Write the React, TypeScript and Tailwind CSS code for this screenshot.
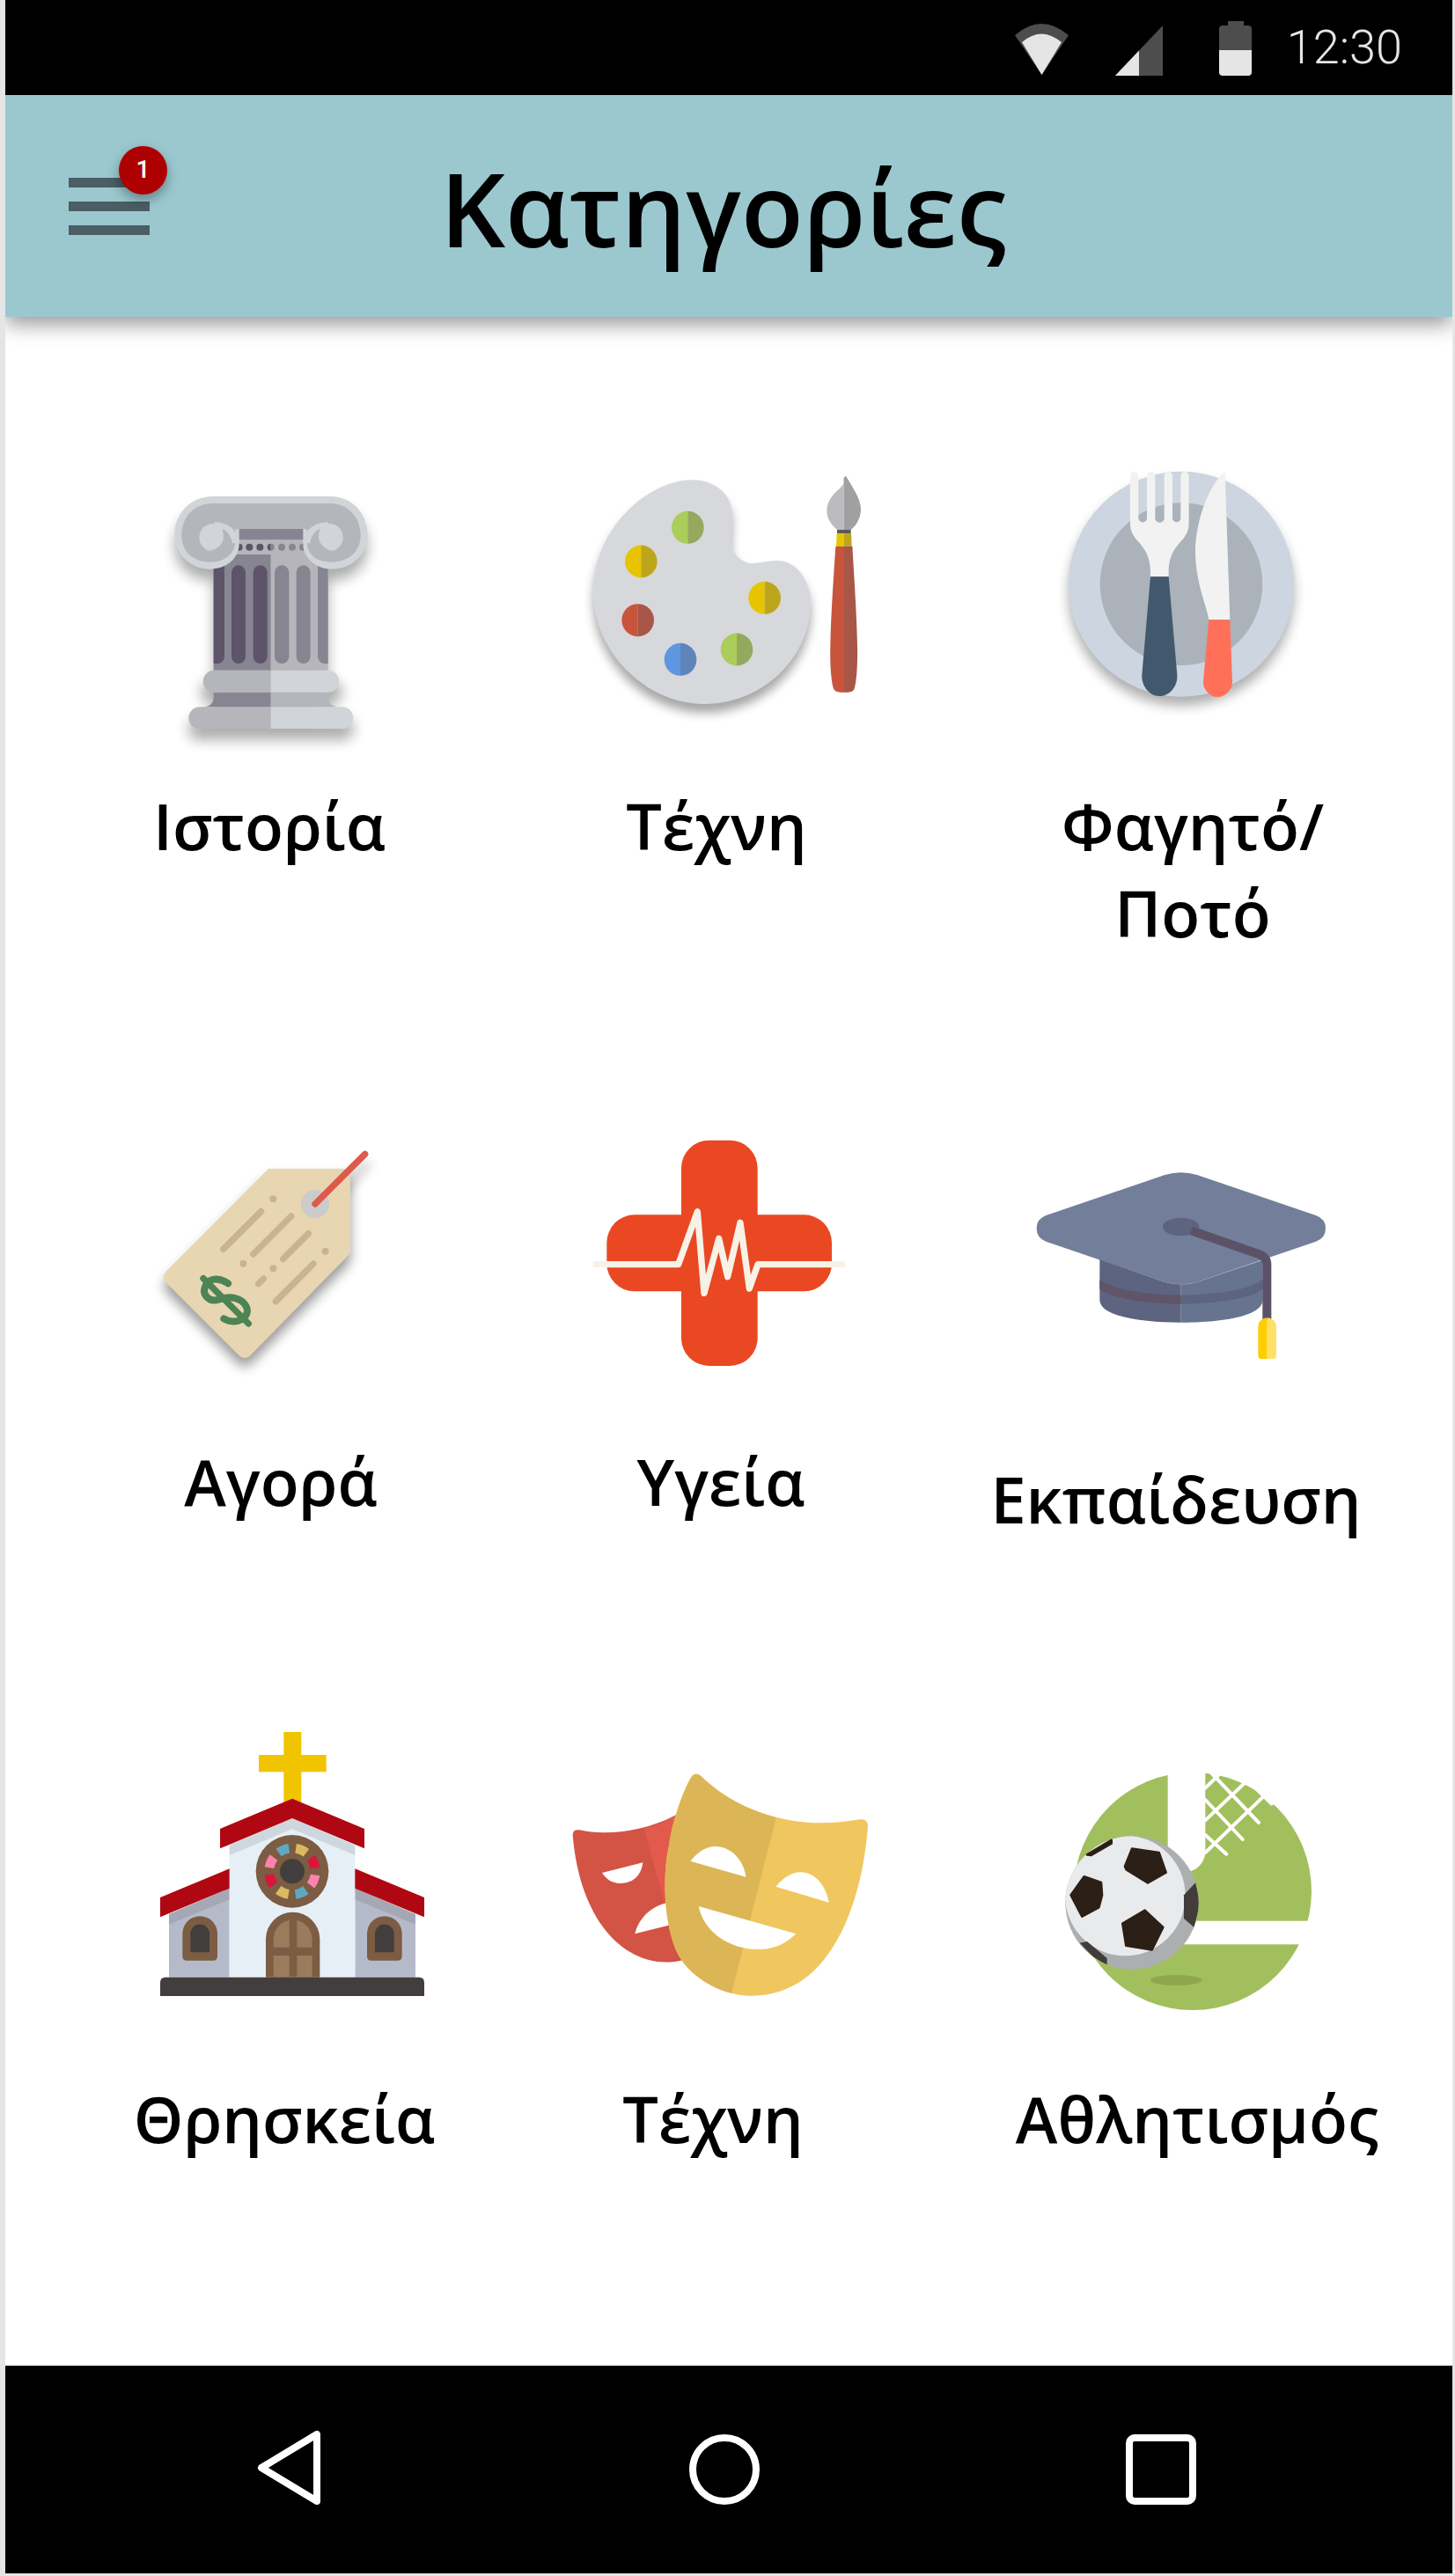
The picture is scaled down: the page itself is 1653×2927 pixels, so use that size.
import React from "react";

const Blur = ({ id, d }: { id: string; d: number }) => (
  <filter id={id} x="-40%" y="-40%" width="180%" height="180%">
    <feGaussianBlur stdDeviation={d} />
  </filter>
);

function ColumnIcon() {
  const silhouette =
    "M145 325 C145 250 200 192 275 192 H675 C750 192 803 250 803 325 C803 390 750 440 680 440 H668 V785 H680 A37 37 0 0 1 680 860 H668 V880 Q670 905 698 910 H720 A37 37 0 0 1 720 984 H228 A37 37 0 0 1 228 910 H250 Q276 905 278 880 V860 H270 A37 37 0 0 1 270 785 H278 V440 H265 C200 440 145 390 145 325Z";
  const Volute = ({ flip }: { flip?: boolean }) => (
    <g transform={flip ? "translate(948 0) scale(-1 1)" : undefined}>
      <path d="M280 292 C325 292 353 320 353 352" fill="none" stroke="#d1d4d9" strokeWidth="24" />
      <circle cx="276" cy="332" r="47" fill="#d1d4d9" />
      <path d="M306 303 C322 338 305 370 262 378 C300 385 332 365 332 332 C332 318 320 307 306 303Z" fill="#b5b6bb" />
    </g>
  );
  return (
    <svg viewBox="0 0 1200 1080" className="block h-[360px] w-[400px]">
      <defs>
        <Blur id="colblur" d={22} />
      </defs>
      <path d={silhouette} transform="translate(0 38)" fill="#000" opacity="0.32" filter="url(#colblur)" />
      <rect x="278" y="390" width="195" height="395" fill="#888593" />
      <rect x="473" y="390" width="195" height="395" fill="#b5b6bb" />
      <rect x="340" y="303" width="270" height="37" fill="#888593" />
      <rect x="340" y="340" width="270" height="50" fill="#b5b6bb" />
      {[365, 400, 436].map((x) => (
        <circle key={x} cx={x} cy="365" r="12" fill="#5d5469" />
      ))}
      {[510, 546, 582].map((x) => (
        <circle key={x} cx={x} cy="365" r="12" fill="#888593" />
      ))}
      <path d="M473 353 A12 12 0 0 0 473 377Z" fill="#5d5469" />
      <path d="M473 353 A12 12 0 0 1 473 377Z" fill="#888593" />
      <path d="M278 427 H315 V738 A24 24 0 0 1 291 762 H278Z" fill="#5d5469" />
      <rect x="339" y="427" width="48" height="335" rx="24" fill="#5d5469" />
      <rect x="413" y="427" width="48" height="335" rx="24" fill="#5d5469" />
      <rect x="486" y="427" width="49" height="335" rx="24" fill="#888593" />
      <rect x="560" y="427" width="48" height="335" rx="24" fill="#888593" />
      <path d="M668 427 H633 V738 A24 24 0 0 0 657 762 H668Z" fill="#888593" />
      <path
        d="M145 325 C145 250 200 192 275 192 H675 C750 192 803 250 803 325 C803 390 750 440 680 440 C625 440 583 400 583 355 V303 H365 V355 C365 400 325 440 265 440 C200 440 145 390 145 325Z"
        fill="#d1d4d9"
      />
      <path
        d="M169 325 C169 262 212 216 275 216 H675 C735 216 779 262 779 325 C779 382 735 416 680 416 C620 416 595 385 595 340 V303 H353 V340 C353 385 320 416 265 416 C210 416 169 382 169 325Z"
        fill="#b5b6bb"
      />
      <Volute />
      <Volute flip />
      <path d="M473 860 H278 V880 Q276 905 250 910 H473Z" fill="#888593" />
      <path d="M473 860 H668 V880 Q670 905 698 910 H473Z" fill="#b5b6bb" />
      <path d="M473 785 H280 A37.5 37.5 0 0 0 280 860 H473Z" fill="#b5b6bb" />
      <path d="M473 785 H668 A37.5 37.5 0 0 1 668 860 H473Z" fill="#d1d4d9" />
      <path d="M473 910 H230 A37 37 0 0 0 230 984 H473Z" fill="#b5b6bb" />
      <path d="M473 910 H717 A37 37 0 0 1 717 984 H473Z" fill="#d1d4d9" />
    </svg>
  );
}

function PaletteIcon() {
  const blob =
    "M440 136 C520 136 575 190 575 250 C575 290 572 320 572 350 C575 390 610 420 645 420 C670 420 695 411 730 411 C795 411 843 480 843 555 C843 740 680 900 480 900 C280 900 102 720 102 520 C102 300 290 136 440 136Z";
  const dots: [number, number, string, string][] = [
    [424, 298, "#abcd5c", "#95a95e"],
    [265, 414, "#e6c500", "#bea61c"],
    [686, 538, "#e6c500", "#bea61c"],
    [254, 614, "#c8543c", "#a75647"],
    [399, 748, "#5e97e0", "#5f84ba"],
    [591, 714, "#abcd5c", "#95a95e"],
  ];
  return (
    <svg viewBox="0 0 1200 960" className="block h-[320px] w-[400px] overflow-visible">
      <defs>
        <Blur id="palblur" d={18} />
      </defs>
      <path d={blob} transform="translate(0 30)" fill="#000" opacity="0.35" filter="url(#palblur)" />
      <path d={blob} fill="#d7d8dc" />
      {dots.map(([x, y, a, b]) => (
        <g key={`${x}-${y}`}>
          <path d={`M${x} ${y - 55.5} A55 55.5 0 0 0 ${x} ${y + 55.5}Z`} fill={a} />
          <path d={`M${x} ${y - 55.5} A55 55.5 0 0 1 ${x} ${y + 55.5}Z`} fill={b} />
        </g>
      ))}
      <path d="M956 306 H933 C915 290 898 270 898 240 C898 205 925 180 942 165 C955 152 962 135 963 122 L956 130Z" fill="#bcbcbe" />
      <path d="M956 306 H980 C1000 290 1014 265 1014 235 C1014 200 985 160 963 122 L956 130Z" fill="#a0a0a2" />
      <rect x="933" y="306" width="47" height="13" fill="#5a5a5a" />
      <path d="M932 319 H957 V362 H930Z" fill="#e6c500" />
      <path d="M957 319 H981 L983 362 H957Z" fill="#bea61c" />
      <path d="M957 362 H928 C920 480 912 600 910 700 C908 780 915 835 922 850 Q928 860 945 860 H957Z" fill="#c8543c" />
      <path d="M957 362 H985 C992 480 1000 600 1002 700 C1004 780 997 835 991 850 Q985 860 970 860 H957Z" fill="#a75647" />
    </svg>
  );
}

function CutleryIcon() {
  return (
    <svg viewBox="0 0 960 900" className="block h-[300px] w-[320px] overflow-visible">
      <defs>
        <Blur id="cutblur" d={20} />
      </defs>
      <circle cx="486" cy="491" r="384" fill="#000" opacity="0.32" filter="url(#cutblur)" />
      <circle cx="486" cy="461" r="384" fill="#cdd5e0" />
      <circle cx="486" cy="461" r="277" fill="#abb2ba" />
      <path
        d="M312 92 A14 14 0 0 1 340 92 V236 A14.5 14.5 0 0 0 369 236 V92 A14 14 0 0 1 397 92 V236 A15.5 15.5 0 0 0 428 236 V92 A14 14 0 0 1 456 92 V236 A14 14 0 0 0 484 236 V92 A14 14 0 0 1 512 92 V255 C512 320 443 320 443 420 V436 H381 V420 C381 320 312 320 312 255Z"
        fill="#f2f2f2"
      />
      <path d="M381 436 H443 L472 770 C475 810 445 843 412 843 C378 843 350 810 352 770Z" fill="#42596d" />
      <path d="M635 78 L652 582 H580 C575 540 535 460 534 350 C534 250 580 120 635 78Z" fill="#f2f2f2" />
      <path d="M580 583 H652 L660 795 C660 822 635 846 610 846 C585 846 560 822 561 795Z" fill="#ff7058" />
    </svg>
  );
}

function TagIcon() {
  const tag = "M435 144 H714 V432 L374 780 Q354 800 334 780 L88 534 Q68 514 88 492Z";
  const lines = [
    [281, 418, 410, 289],
    [383, 435, 512, 306],
    [485, 451, 571, 365],
    [460, 596, 588, 468],
    [401, 536, 418, 519],
  ];
  return (
    <svg viewBox="0 0 900 900" className="block h-[300px] w-[300px] overflow-visible">
      <defs>
        <Blur id="tagblur" d={20} />
      </defs>
      <path d={tag} transform="translate(0 30)" fill="#000" opacity="0.4" filter="url(#tagblur)" />
      <path d="M594 264 L764 94" transform="translate(10 30)" stroke="#000" strokeWidth="22" opacity="0.3" filter="url(#tagblur)" />
      <path d={tag} fill="#e8d6b2" />
      <circle cx="594" cy="264" r="48" fill="#cbcbcc" />
      <path d="M594 264 L764 94" stroke="#de5a4a" strokeWidth="22" strokeLinecap="round" />
      {lines.map(([a, b, c, d]) => (
        <path key={a} d={`M${a} ${b} L${c} ${d}`} stroke="#cbb391" strokeWidth="22" strokeLinecap="round" />
      ))}
      {[
        [451, 247],
        [349, 467],
        [451, 484],
        [629, 425],
      ].map(([x, y]) => (
        <circle key={x + y} cx={x} cy={y} r="12" fill="#cbb391" />
      ))}
      <path d="M213 518 L367 672" stroke="#4c8455" strokeWidth="22" strokeLinecap="round" />
      <path
        d="M297 535 C270 515 235 515 222 540 C205 570 230 600 265 590 C305 575 345 585 360 615 C375 650 325 680 283 655"
        fill="none"
        stroke="#4c8455"
        strokeWidth="24"
        strokeLinecap="round"
      />
    </svg>
  );
}

function HealthIcon() {
  return (
    <svg viewBox="0 0 900 900" className="block h-[300px] w-[300px] overflow-visible">
      <rect x="342" y="47" width="260" height="769" rx="95" fill="#e94823" />
      <rect x="88" y="301" width="767" height="261" rx="95" fill="#e94823" />
      <path
        d="M52 470 H332 L397 290 L420 568 L470 382 L500 512 L543 328 L574 552 L603 470 H890"
        fill="none"
        stroke="#f8f1e5"
        strokeWidth="22"
        strokeLinecap="round"
        strokeLinejoin="round"
      />
    </svg>
  );
}

function CapIcon() {
  return (
    <svg viewBox="0 0 1140 840" className="block h-[280px] w-[380px]">
      <path d="M268 392 L490 470 Q520 478 545 478 V608 C420 608 268 590 268 530Z" fill="#5c6480" />
      <path d="M545 478 Q575 478 600 470 L824 395 V530 C824 590 670 608 545 608Z" fill="#677490" />
      <path d="M268 462 C310 495 430 515 545 515 V545 C430 545 310 525 268 495Z" fill="#5f5468" />
      <path d="M545 515 C660 515 790 495 824 460 V495 C790 525 660 545 545 545Z" fill="#5c6480" />
      <path
        d="M490 105 Q545 88 600 105 L1005 243 Q1038 255 1038 287 Q1038 320 1005 332 L600 470 Q545 485 490 470 L85 332 Q53 320 53 287 Q53 255 85 243Z"
        fill="#737f9a"
      />
      <ellipse cx="545" cy="282" rx="62" ry="31" fill="#5c6480" />
      <path d="M580 295 L810 375 Q838 385 838 410 V600" fill="none" stroke="#5c5268" strokeWidth="30" />
      <path d="M839 592 A31 31 0 0 0 808 623 V720 Q808 732 820 732 H839Z" fill="#ffcd00" />
      <path d="M839 592 A31 31 0 0 1 870 623 V720 Q870 732 858 732 H839Z" fill="#ffe066" />
    </svg>
  );
}

function ChurchIcon() {
  const cx = 516;
  const cy = 559;
  const sector = (a0: number, a1: number) => {
    const p = (r: number, a: number) => {
      const t = ((a - 90) * Math.PI) / 180;
      return `${(cx + r * Math.cos(t)).toFixed(1)} ${(cy + r * Math.sin(t)).toFixed(1)}`;
    };
    return `M${p(63, a0)} L${p(95, a0)} A95 95 0 0 1 ${p(95, a1)} L${p(63, a1)} A63 63 0 0 0 ${p(63, a0)}Z`;
  };
  const panes = ["#dbb95f", "#dc143c", "#ff82ac", "#5fa8c2", "#dbb95f", "#dc143c", "#ff82ac", "#5fa8c2"];
  return (
    <svg viewBox="0 0 1020 1020" className="block h-[340px] w-[340px]">
      <rect x="487" y="84" width="60" height="250" fill="#f0c500" />
      <rect x="402" y="162" width="230" height="58" fill="#f0c500" />
      <path d="M96 705 L302 617 V920 H96Z" fill="#b5bacb" />
      <path d="M936 705 L730 617 V920 H936Z" fill="#b5bacb" />
      <path d="M96 705 L302 617 V655 L96 740Z" fill="#a5a8b4" />
      <path d="M936 705 L730 617 V655 L936 740Z" fill="#a5a8b4" />
      <path d="M302 470 L516 378 L730 470 V920 H302Z" fill="#e6eff6" />
      <path d="M302 470 L516 378 L730 470 V504 L516 415 L302 504Z" fill="#cfd7de" />
      <path d="M270 414 L516 311 L762 414 V481 L516 378 L270 481Z" fill="#b00812" />
      <path d="M66 648 L302 550 V617 L66 715Z" fill="#b00812" />
      <path d="M966 648 L730 550 V617 L966 715Z" fill="#b00812" />
      <circle cx={cx} cy={cy} r="124" fill="#7c5c42" />
      {panes.map((c, i) => (
        <path key={i} d={sector(i * 45 + 9, i * 45 + 37)} fill={c} />
      ))}
      <circle cx={cx} cy={cy} r="42" fill="#423e3d" />
      <path d="M426 920 V790 A92 92 0 0 1 610 790 V920Z" fill="#7c5c42" />
      <path d="M452 818 V790 A66 66 0 0 1 506 726 V818Z" fill="#9c7a5c" />
      <path d="M584 818 V790 A66 66 0 0 0 532 726 V818Z" fill="#9c7a5c" />
      <rect x="452" y="846" width="54" height="74" fill="#9c7a5c" />
      <rect x="532" y="846" width="52" height="74" fill="#9c7a5c" />
      <path d="M142 771 A59.5 59.5 0 0 1 261 771 V848 Q261 863 246 863 H157 Q142 863 142 848Z" fill="#7c5c42" />
      <path d="M169 772 A32.5 32.5 0 0 1 234 772 V835 H169Z" fill="#423e3d" />
      <path d="M771 771 A59.5 59.5 0 0 1 890 771 V848 Q890 863 875 863 H786 Q771 863 771 848Z" fill="#7c5c42" />
      <path d="M798 772 A32.5 32.5 0 0 1 863 772 V835 H798Z" fill="#423e3d" />
      <path d="M66 938 Q66 920 84 920 H948 Q966 920 966 938 V984 H66Z" fill="#423e3d" />
    </svg>
  );
}

function MasksIcon() {
  const yellow =
    "M465 90 Q478 68 500 85 C590 175 780 280 1040 232 Q1068 228 1068 255 C1050 500 950 835 670 833 C560 833 450 760 415 680 C375 590 365 430 390 320 C400 240 440 130 465 90Z";
  return (
    <svg viewBox="0 0 1140 900" className="block h-[300px] w-[380px]">
      <defs>
        <clipPath id="maskleft">
          <polygon points="0,0 813,0 584,900 0,900" />
        </clipPath>
      </defs>
      <path d="M62 285 Q62 265 85 268 C180 290 320 270 420 213 L450 708 C280 760 90 620 62 285Z" fill="#d35345" />
      <path d="M305 263 C345 255 385 235 420 213 L400 530 L375 520Z" fill="#e25a4c" />
      <path d="M162 414 L301 379 C295 430 260 450 225 450 C195 450 175 435 162 414Z" fill="#fff" />
      <path d="M274 622 C285 570 330 525 390 515 L400 590Z" fill="#fff" />
      <path d={yellow} fill="#f0c75e" />
      <path d={yellow} fill="#dcb656" clipPath="url(#maskleft)" />
      <path d="M463 374 C490 340 520 324 548 324 C600 324 645 370 652 428Z" fill="#fff" />
      <path d="M754 461 C780 430 810 412 838 412 C890 412 925 460 935 515Z" fill="#fff" />
      <path d="M491 528 L823 622 C780 665 735 675 695 675 C600 675 510 620 491 528Z" fill="#fff" />
    </svg>
  );
}

function SoccerIcon() {
  return (
    <svg viewBox="0 0 1020 900" className="block h-[300px] w-[340px]">
      <defs>
        <clipPath id="ballclip">
          <circle cx="318" cy="516" r="227" />
        </clipPath>
      </defs>
      <circle cx="525" cy="477" r="405" fill="#a2bf5d" />
      <path d="M440 60 H568 V350 C560 385 540 405 505 412 H440Z" fill="#fff" />
      <rect x="480" y="578" width="480" height="80" fill="#fff" />
      <path d="M700 95 L792 185 L880 150 L760 40Z" fill="#fff" />
      <path
        d="M590 75 L750 243 M568 165 L695 300 M568 285 L640 350 M568 125 L612 82 M568 235 L700 110 M568 345 L765 155"
        stroke="#fff"
        strokeWidth="12"
        strokeLinecap="round"
        fill="none"
      />
      <ellipse cx="469" cy="780" rx="88" ry="18" fill="#8da64f" />
      <circle cx="318" cy="516" r="227" fill="#adaeb0" />
      <g clipPath="url(#ballclip)">
        <circle cx="295" cy="492" r="205" fill="#e9eaec" />
        <path d="M535 447 L550 520 L530 600 L495 570 L495 490Z" fill="#423d3a" />
        <path d="M140 653 L165 648 L233 705 V730 L185 700Z" fill="#423d3a" />
      </g>
      <g fill="#2c1f15" stroke="#2c1f15" strokeWidth="8" strokeLinejoin="round">
        <path d="M318 332 L410 345 L434 413 L372 448 L299 403 L294 392Z" />
        <path d="M155 427 L213 447 L216 490 L205 532 L148 563 L110 490Z" />
        <path d="M362 542 L424 600 L386 676 L298 662 L286 587Z" />
        <path d="M165 352 L248 303 V314 L178 354Z" />
      </g>
    </svg>
  );
}

const font = "font-['Open_Sans','Noto_Sans',sans-serif]";

const cells = [
  { icon: <ColumnIcon />, box: "ml-[144px] mt-[140px]", label: "ml-[26px] mt-[29px]", text: ["Ιστορία"] },
  { icon: <PaletteIcon />, box: "ml-[86px] mt-[140px]", label: "ml-[-14px] mt-[69px]", text: ["Τέχνη"] },
  { icon: <CutleryIcon />, box: "ml-[78px] mt-[150px]", label: "ml-[-21px] mt-[79px]", text: ["Φαγητό/", "Ποτό"] },
  { icon: <TagIcon />, box: "ml-[154px]", label: "ml-[39px] mt-[54px]", text: ["Αγορά"] },
  { icon: <HealthIcon />, box: "ml-[106px]", label: "ml-[-9px] mt-[54px]", text: ["Υγεία"] },
  { icon: <CapIcon />, box: "ml-[58px] mt-[20px]", label: "ml-[-40px] mt-[74px]", text: ["Εκπαίδευση"] },
  { icon: <ChurchIcon />, box: "ml-[154px]", label: "ml-[43px] mt-[78px]", text: ["Θρησκεία"] },
  { icon: <MasksIcon />, box: "ml-[76px] mt-[50px]", label: "ml-[-18px] mt-[68px]", text: ["Τέχνη"] },
  { icon: <SoccerIcon />, box: "ml-[78px] mt-[50px]", label: "ml-[-16px] mt-[68px]", text: ["Αθλητισμός"] },
];

export default function App() {
  return (
    <div className={`h-[2927px] w-[1653px] bg-[#e5e5e5] pb-[3px] pl-[6px] pr-[3px] ${font}`}>
      <div className="flex h-full flex-col overflow-hidden">
        <header className="flex h-[108px] shrink-0 items-center justify-end bg-black pr-[57px]">
          <svg width="61" height="58" viewBox="0 0 61 58" className="mr-[53px] mt-[3px] block">
            <path d="M0 13 Q30 -13 61 13 L30.5 58Z" fill="#4d4d4d" />
            <path d="M8 21 Q30 2 53 21 L30.5 58Z" fill="#e5e5e5" />
          </svg>
          <svg width="54" height="57" viewBox="0 0 54 57" className="mr-[64px] mt-[7px] block">
            <path d="M0 57 L54 0 V57Z" fill="#4d4d4d" />
            <path d="M0 57 L27 28.5 V57Z" fill="#e5e5e5" />
          </svg>
          <svg width="37" height="62" viewBox="0 0 37 62" className="mr-[40px] mt-[2px] block">
            <path d="M10 0 H28 V5 H33 Q37 5 37 9 V33 H0 V9 Q0 5 4 5 H10Z" fill="#4d4d4d" />
            <path d="M0 33 H37 V58 Q37 62 33 62 H4 Q0 62 0 58Z" fill="#e5e5e5" />
          </svg>
          <span className="font-['Roboto',sans-serif] text-[54px] font-light leading-none text-[#e5e5e5]">12:30</span>
        </header>

        <div className="relative z-10 flex h-[252px] shrink-0 items-center bg-[#9bc8cf] shadow-[0_8px_22px_rgba(0,0,0,0.42)]">
          <div className="relative ml-[72px] flex w-[92px] flex-col gap-[16px]">
            <div className="h-[11px] bg-[#4a5e63]" />
            <div className="h-[11px] bg-[#4a5e63]" />
            <div className="h-[11px] bg-[#4a5e63]" />
            <div className="absolute left-[57px] top-[-36px] flex h-[55px] w-[55px] items-center justify-center rounded-full bg-[#ae0000] font-['Roboto',sans-serif] text-[28px] font-medium text-white shadow-[0_6px_14px_rgba(0,0,0,0.35)]">
              1
            </div>
          </div>
          <h1 className="ml-[330px] mt-[4px] text-[116px] font-semibold leading-none text-black">Κατηγορίες</h1>
        </div>

        <main className="grid min-h-0 flex-1 grid-cols-[548px_548px_548px] grid-rows-[920px_660px_748px] bg-white">
          {cells.map((c, i) => (
            <div key={i} className="flex flex-col items-start">
              <div className={c.box}>{c.icon}</div>
              <div className={`w-[548px] text-center text-[72px] font-semibold leading-[99px] text-black ${c.label}`}>
                {c.text.map((t) => (
                  <div key={t}>{t}</div>
                ))}
              </div>
            </div>
          ))}
        </main>

        <nav className="flex h-[236px] shrink-0 items-center bg-black">
          <svg width="76" height="84" viewBox="0 0 76 84" className="ml-[283px] mt-[-5px] block">
            <path d="M71 4 V80 L8 42Z" fill="none" stroke="#fff" strokeWidth="8" strokeLinejoin="round" />
          </svg>
          <svg width="80" height="80" viewBox="0 0 80 80" className="ml-[418px] block">
            <circle cx="40" cy="40" r="36" fill="none" stroke="#fff" strokeWidth="8" />
          </svg>
          <svg width="80" height="80" viewBox="0 0 80 80" className="ml-[416px] block">
            <rect x="4" y="4" width="72" height="72" rx="6" fill="none" stroke="#fff" strokeWidth="8" />
          </svg>
        </nav>
      </div>
    </div>
  );
}
